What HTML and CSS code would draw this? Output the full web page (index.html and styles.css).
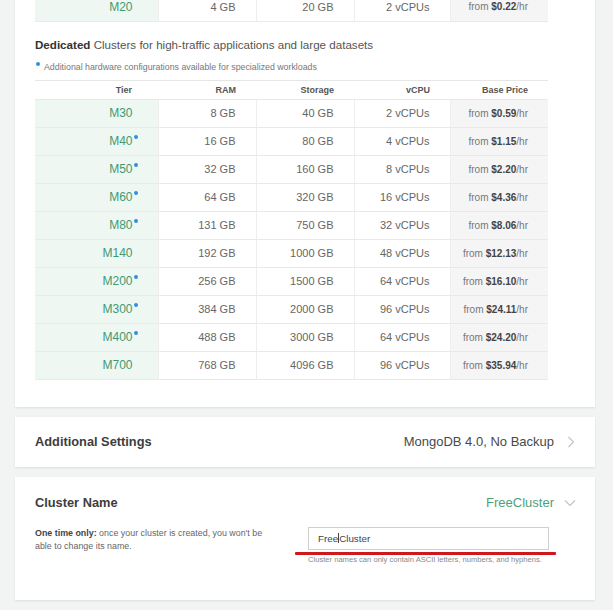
FILE: index.html
```html
<!DOCTYPE html>
<html lang="en">
<head>
<meta charset="utf-8">
<title>Cluster Tier</title>
<link rel="stylesheet" href="styles.css">
</head>
<body>
<div class="page">
  <section class="card card-tiers">
    <table class="tiers">
      <colgroup><col class="c-tier"><col class="c-ram"><col class="c-sto"><col class="c-cpu"><col class="c-price"></colgroup>
      <tbody>
        <tr><td class="tier">M20</td><td>4 GB</td><td>20 GB</td><td>2 vCPUs</td><td class="price">from <b>$0.22</b>/hr</td></tr>
      </tbody>
    </table>

    <h2 class="group-title"><strong>Dedicated</strong> Clusters for high-traffic applications and large datasets</h2>
    <p class="footnote"><span class="note-dot"></span>Additional hardware configurations available for specialized workloads</p>

    <table class="tiers">
      <colgroup><col class="c-tier"><col class="c-ram"><col class="c-sto"><col class="c-cpu"><col class="c-price"></colgroup>
      <thead>
        <tr><th class="th-tier">Tier</th><th>RAM</th><th>Storage</th><th>vCPU</th><th class="th-price">Base Price</th></tr>
      </thead>
      <tbody>
        <tr><td class="tier">M30</td><td>8 GB</td><td>40 GB</td><td>2 vCPUs</td><td class="price">from <b>$0.59</b>/hr</td></tr>
        <tr><td class="tier">M40<span class="dot"></span></td><td>16 GB</td><td>80 GB</td><td>4 vCPUs</td><td class="price">from <b>$1.15</b>/hr</td></tr>
        <tr><td class="tier">M50<span class="dot"></span></td><td>32 GB</td><td>160 GB</td><td>8 vCPUs</td><td class="price">from <b>$2.20</b>/hr</td></tr>
        <tr><td class="tier">M60<span class="dot"></span></td><td>64 GB</td><td>320 GB</td><td>16 vCPUs</td><td class="price">from <b>$4.36</b>/hr</td></tr>
        <tr><td class="tier">M80<span class="dot"></span></td><td>131 GB</td><td>750 GB</td><td>32 vCPUs</td><td class="price">from <b>$8.06</b>/hr</td></tr>
        <tr><td class="tier">M140</td><td>192 GB</td><td>1000 GB</td><td>48 vCPUs</td><td class="price">from <b>$12.13</b>/hr</td></tr>
        <tr><td class="tier">M200<span class="dot"></span></td><td>256 GB</td><td>1500 GB</td><td>64 vCPUs</td><td class="price">from <b>$16.10</b>/hr</td></tr>
        <tr><td class="tier">M300<span class="dot"></span></td><td>384 GB</td><td>2000 GB</td><td>96 vCPUs</td><td class="price">from <b>$24.11</b>/hr</td></tr>
        <tr><td class="tier">M400<span class="dot"></span></td><td>488 GB</td><td>3000 GB</td><td>64 vCPUs</td><td class="price">from <b>$24.20</b>/hr</td></tr>
        <tr><td class="tier">M700</td><td>768 GB</td><td>4096 GB</td><td>96 vCPUs</td><td class="price">from <b>$35.94</b>/hr</td></tr>
      </tbody>
    </table>
  </section>

  <section class="card card-row">
    <h3 class="row-title">Additional Settings</h3>
    <div class="row-value">
      <span>MongoDB 4.0, No Backup</span>
      <svg class="chev" width="8" height="12" viewBox="0 0 8 12"><path d="M1.5 1 L6.5 6 L1.5 11" fill="none" stroke="#c4c4c4" stroke-width="1.2"/></svg>
    </div>
  </section>

  <section class="card card-name">
    <div class="name-head">
      <h3 class="row-title">Cluster Name</h3>
      <div class="row-value green">
        <span>FreeCluster</span>
        <svg class="chev-down" width="12" height="8" viewBox="0 0 12 8"><path d="M1 1.5 L6 6.5 L11 1.5" fill="none" stroke="#c4c4c4" stroke-width="1.2"/></svg>
      </div>
    </div>
    <div class="name-body">
      <p class="name-desc"><strong>One time only:</strong> once your cluster is created, you won't be<br>able to change its name.</p>
      <div class="name-field">
        <div class="input">Free<span class="caret"></span>Cluste<span class="ibeam">r</span></div>
        <span class="annot"></span>
        <p class="hint">Cluster names can only contain ASCII letters, numbers, and hyphens.</p>
      </div>
    </div>
  </section>
</div>
</body>
</html>
```

FILE: styles.css
```css
* { box-sizing: border-box; }

body {
  margin: 0;
  background: #f2f3f3;
  font-family: "Liberation Sans", Arial, Helvetica, sans-serif;
  color: #555;
  overflow: hidden;
}

.page {
  margin-top: -7px;
  padding: 0 18px 10px 15px;
  display: flex;
  flex-direction: column;
  gap: 10px;
}

.card {
  background: #fff;
  box-shadow: 0 1px 2px rgba(0, 0, 0, 0.09);
  padding: 0 20px;
}

.card-tiers {
  padding-bottom: 27px;
}

/* tables */
.tiers {
  width: 513px;
  border-collapse: collapse;
  table-layout: fixed;
}
.c-tier { width: 123px; }
.c-ram { width: 98px; }
.c-sto { width: 98px; }
.c-cpu { width: 96px; }
.c-price { width: 98px; }

.tiers td {
  height: 28px;
  padding: 0 20px 0 0;
  text-align: right;
  font-size: 11px;
  color: #666;
  border-bottom: 1px solid #e9e9e9;
  border-left: 1px solid #eeeeee;
  white-space: nowrap;
}
.tiers td.tier {
  background: #eef7f2;
  color: #3f9a72;
  font-size: 12px;
  padding-right: 25px;
  border-left: none;
  border-bottom-color: #e4eee9;
}
.tiers td.price {
  background: #f5f5f5;
  font-size: 10px;
  color: #777;
  padding-right: 20px;
}
.tiers td.price b {
  color: #444;
  font-weight: bold;
}

.dot {
  display: inline-block;
  width: 4px;
  height: 4px;
  border-radius: 50%;
  background: #3390dc;
  vertical-align: top;
  margin: 1px -5px 0 1px;
}

.tiers th {
  height: 19px;
  padding: 0 20px 0 0;
  text-align: right;
  font-size: 9px;
  font-weight: bold;
  color: #555;
  border-top: 1px solid #e6e6e6;
  border-bottom: 1px solid #e9e9e9;
}
.tiers th.th-tier { padding-right: 26px; }

.group-title {
  margin: 15px 0 0;
  font-size: 11.6px;
  line-height: 16px;
  font-weight: normal;
  color: #555;
}
.group-title strong {
  color: #333;
  font-weight: bold;
}

.footnote {
  margin: 9px 0 8px;
  font-size: 8.8px;
  line-height: 10px;
  color: #777;
  display: flex;
  align-items: flex-start;
}
.note-dot {
  width: 4px;
  height: 4px;
  border-radius: 50%;
  background: #3390dc;
  margin: 0 4px 0 1px;
  flex: none;
}

/* rows */
.card-row {
  height: 50px;
  display: flex;
  align-items: center;
  justify-content: space-between;
}
.row-title {
  margin: 0;
  font-size: 12.8px;
  font-weight: bold;
  color: #3d3d3d;
}
.row-value {
  display: flex;
  align-items: center;
  font-size: 13px;
  color: #494949;
}
.chev { margin-left: 13px; margin-right: 0; }
.row-value.green { color: #4ca27c; }
.chev-down { margin-left: 10px; margin-right: -1px; }

.card-name {
  padding-top: 18px;
  height: 123px;
}
.name-head {
  display: flex;
  align-items: center;
  justify-content: space-between;
  height: 16px;
}
.name-body {
  display: flex;
  margin-top: 16px;
}
.name-desc {
  margin: 0;
  width: 238px;
  font-size: 8.9px;
  line-height: 13px;
  color: #666;
  white-space: nowrap;
}
.name-desc strong { color: #444; }

.name-field {
  margin-left: 35px;
  position: relative;
  width: 241px;
}
.input {
  height: 23px;
  border: 1px solid #cfcfcf;
  padding: 0 9px;
  font-size: 9.8px;
  line-height: 21px;
  color: #444;
  white-space: nowrap;
}
.caret {
  display: inline-block;
  width: 1px;
  height: 10px;
  background: #444;
  vertical-align: -1px;
}
.ibeam {
  color: #444;
}
.annot {
  position: absolute;
  left: -13px;
  top: 25px;
  width: 261px;
  height: 3px;
  background: #d0171b;
  border-radius: 1px;
}
.hint {
  margin: 5px 0 0;
  font-size: 7.6px;
  line-height: 9px;
  color: #888;
  white-space: nowrap;
}
```
